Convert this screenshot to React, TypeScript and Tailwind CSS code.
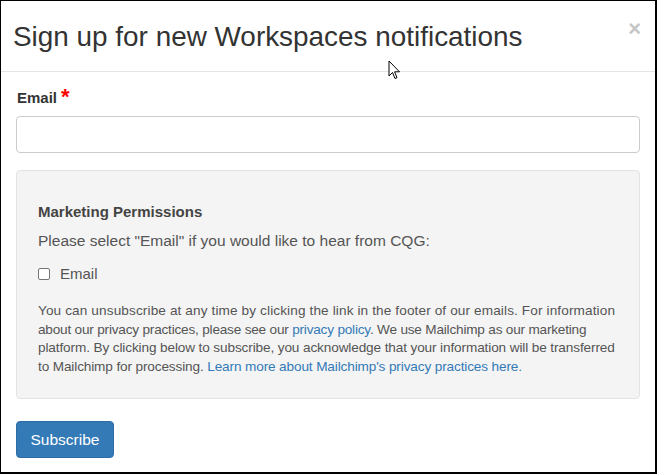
import React from "react";

export default function App() {
  return (
    <div className="w-[657px] h-[474px] bg-black pt-px pl-px" style={{ fontFamily: '"Liberation Sans", Arial, sans-serif' }}>
      <div className="relative w-[654px] h-[471px] bg-white flex flex-col">
        <div className="h-[71px] border-b border-[#e5e5e5] flex items-center pl-[12px] relative">
          <h4 className="text-[27.9px] leading-[30px] text-[#333] pt-[2px]">Sign up for new Workspaces notifications</h4>
          <span className="absolute right-[14px] top-[17px] text-[22px] font-bold text-[#c6c6c6] leading-[22px]">×</span>
        </div>
        <div className="px-[15px] pt-[16px]">
          <label className="flex items-start text-[15px] font-bold text-[#333] leading-[20px] ml-[1px]">
            Email <span className="text-[#ff0000] text-[22px] leading-[18px] ml-[4px]">*</span>
          </label>
          <div className="mt-[8px] h-[37px] rounded-[4px] border border-[#cccccc] bg-white" />
          <div className="mt-[17px] h-[229px] rounded-[4px] border border-[#e3e3e3] bg-[#f4f4f4] pl-[21px] pr-[10px] pt-[31px]">
            <div className="text-[15px] text-[#444] leading-[20px] font-bold">Marketing Permissions</div>
            <div className="mt-[9px] text-[15.5px] text-[#555] leading-[20px]">Please select "Email" if you would like to hear from CQG:</div>
            <div className="mt-[13px] flex items-center gap-[10px] text-[15px] text-[#555] leading-[20px]">
              <span className="w-[12px] h-[12px] border border-[#767676] rounded-[2px] bg-white inline-block" />
              <span>Email</span>
            </div>
            <p className="mt-[18px] text-[13.6px] leading-[18.5px] text-[#555] whitespace-nowrap">
              <span className="block tracking-[0.12px]">You can unsubscribe at any time by clicking the link in the footer of our emails. For information</span>
              <span className="block tracking-[-0.2px]">about our privacy practices, please see our <span className="text-[#337ab7]">privacy policy</span>. We use Mailchimp as our marketing</span>
              <span className="block tracking-[-0.12px]">platform. By clicking below to subscribe, you acknowledge that your information will be transferred</span>
              <span className="block tracking-[-0.13px]">to Mailchimp for processing. <span className="text-[#337ab7]">Learn more about Mailchimp's privacy practices here.</span></span>
            </p>
          </div>
          <button className="mt-[22px] h-[37px] w-[98px] rounded-[4px] bg-[#337ab7] border border-[#2e6da4] text-white text-[15.5px]">Subscribe</button>
        </div>
        <svg className="absolute left-[387px] top-[59px]" width="13" height="20" viewBox="0 0 13 20">
          <path d="M1 1 L1 16 L4.5 12.5 L7 18.5 L9 17.7 L6.6 11.8 L11.5 11.8 Z" fill="white" stroke="black" strokeWidth="1" strokeLinejoin="miter" />
        </svg>
      </div>
    </div>
  );
}
